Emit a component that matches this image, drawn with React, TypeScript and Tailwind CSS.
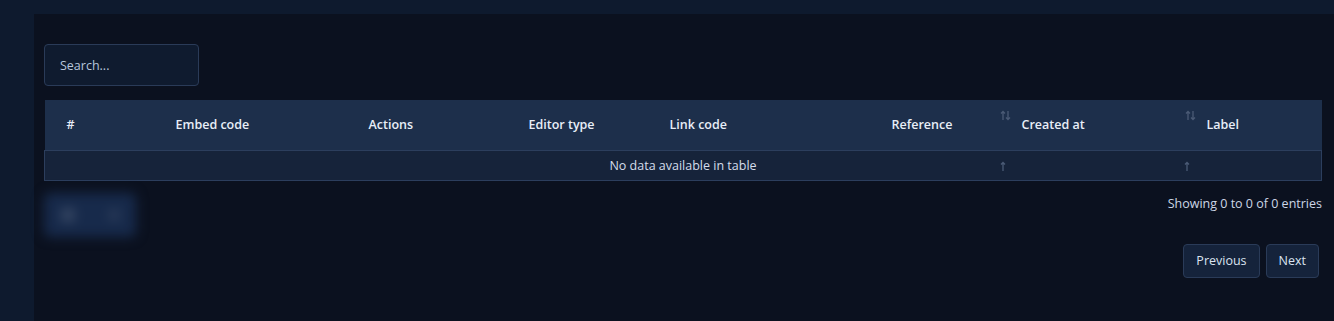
import React from "react";

const columns = [
    { label: "#", width: "w-[109px]" },
    { label: "Embed code", width: "w-[193px]" },
    { label: "Actions", width: "w-[160px]" },
    { label: "Editor type", width: "w-[141px]" },
    { label: "Link code", width: "w-[222px]" },
    { label: "Reference", width: "w-[130px]" },
    { label: "Created at", width: "w-[185px]", sort: true },
    { label: "Label", width: "", sort: true },
];

function SortIcon() {
    return (
        <svg width="11" height="11" viewBox="0 0 11 11" className="text-[#4a5a75]">
            <path d="M3 10V1.5M1 3.5 3 1.5l2 2" stroke="currentColor" strokeWidth="1.3" fill="none" />
            <path d="M8 1v8.5M6 7.5l2 2 2-2" stroke="currentColor" strokeWidth="1.3" fill="none" />
        </svg>
    );
}

function UpIcon() {
    return (
        <svg width="6" height="10" viewBox="0 0 6 10" className="text-[#4a5a75]">
            <path d="M3 10V1.5M1 3.5 3 1.5l2 2" stroke="currentColor" strokeWidth="1.3" fill="none" />
        </svg>
    );
}

export default function App() {
    return (
        <div className="min-h-[321px] bg-[#0e1a2e] pl-[34px] pt-[14px] font-['Open_Sans',sans-serif]">
            <div className="h-[307px] bg-[#0b111f] pl-[10px] pr-[12px] pt-[30px]">
                {/* Search */}
                <div className="w-[155px] h-[42px] rounded-[4px] border border-[#2a3b58] bg-[#0f1b2f] flex items-center pl-[15px] pt-[2px]">
                    <span className="text-[12.5px] text-[#b7c6dc]">Search...</span>
                </div>

                {/* Table */}
                <table className="mt-[14px] w-full border-collapse table-fixed">
                    <thead>
                        <tr className="h-[50px] bg-[#1d2f4b]">
                            {columns.map((col) => (
                                <th
                                    key={col.label}
                                    className={`relative ${col.width} pl-[22px] pt-[2px] text-left text-[12.5px] font-semibold text-[#e8eef8] border-b border-[#2c3e5d]`}
                                >
                                    {col.sort && (
                                        <span className="absolute left-0 top-[10px]">
                                            <SortIcon />
                                        </span>
                                    )}
                                    {col.label}
                                </th>
                            ))}
                        </tr>
                    </thead>
                    <tbody>
                        <tr className="h-[30px] bg-[#16233a]">
                            <td colSpan={8} className="relative pt-[2px] text-center text-[12.5px] text-[#d4ddeb] border border-[#2c3e5d] border-t-0">
                                No data available in table
                                <span className="absolute left-[955px] top-[10px]">
                                    <UpIcon />
                                </span>
                                <span className="absolute left-[1139px] top-[10px]">
                                    <UpIcon />
                                </span>
                            </td>
                        </tr>
                    </tbody>
                </table>

                {/* Footer */}
                <div className="flex justify-between mt-[12px]">
                    <div className="w-[92px] h-[44px] rounded-[6px] bg-[#172a4b] blur-[6px] flex items-center justify-around">
                        <span className="w-[14px] h-[14px] rounded-full bg-[#3a4a66]" />
                        <span className="w-[10px] h-[10px] rounded-full bg-[#33425e]" />
                    </div>
                    <div className="flex flex-col items-end">
                        <span className="text-[12.5px] text-[#cbd6e6] leading-[20px] pt-[1px]">Showing 0 to 0 of 0 entries</span>
                        <div className="flex gap-[6px] mt-[30px] mr-[3px]">
                            <button className="h-[34px] px-[12px] pt-[1px] rounded-[4px] border border-[#2a3b58] bg-[#15233b] text-[12.5px] text-[#dbe4f1]">
                                Previous
                            </button>
                            <button className="h-[34px] px-[12px] pt-[1px] rounded-[4px] border border-[#2a3b58] bg-[#15233b] text-[12.5px] text-[#dbe4f1]">
                                Next
                            </button>
                        </div>
                    </div>
                </div>
            </div>
        </div>
    );
}
